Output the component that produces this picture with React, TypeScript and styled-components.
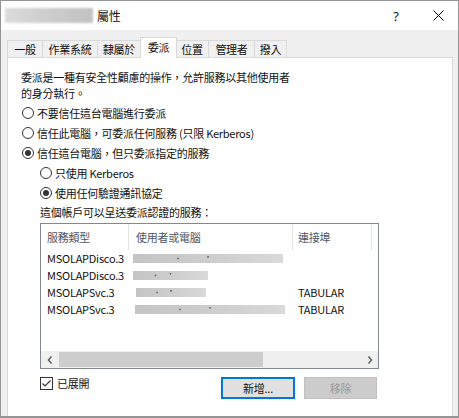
import React from "react";
import styled, { createGlobalStyle, css } from "styled-components";

const GlobalStyle = createGlobalStyle`
  html, body { margin: 0; padding: 0; background: #ffffff; }
  body {
    font-family: "Noto Sans CJK TC", "Noto Sans", sans-serif;
    font-size: 11px;
    letter-spacing: -0.25px;
    color: #111;
  }
  * { box-sizing: border-box; }
`;

const Window = styled.div`
  width: 459px;
  height: 418px;
  border: 1px solid #959595;
  border-bottom-width: 2px;
  background: #f0f0f0;
  display: flex;
  flex-direction: column;
  overflow: hidden;
`;

const TitleBar = styled.div`
  height: 29px;
  background: #ffffff;
  display: flex;
  align-items: center;
  padding-left: 4px;
  flex-shrink: 0;
`;

const BlurredTitle = styled.div`
  width: 88px;
  height: 15px;
  background: linear-gradient(90deg, #dcdcdc, #cbcbcb 55%, #c2c2c2);
  filter: blur(0.8px);
`;

const TitleText = styled.span`
  margin-left: 4px;
  font-size: 12px;
  line-height: 16px;
`;

const CaptionButton = styled.div<{ $w: number }>`
  width: ${(p) => p.$w}px;
  height: 29px;
  display: flex;
  align-items: center;
  justify-content: center;
  font-family: "Noto Sans", sans-serif;
  font-size: 13px;
`;

const Spacer = styled.div`
  flex: 1;
`;

const Body = styled.div`
  flex: 1;
  display: flex;
  flex-direction: column;
  padding: 7px 5px 0 6px;
  min-height: 0;
`;

const TabStrip = styled.div`
  display: flex;
  align-items: flex-end;
  height: 20px;
  flex-shrink: 0;
`;

const Tab = styled.div<{ $w: number; $selected?: boolean; $last?: boolean }>`
  width: ${(p) => p.$w}px;
  height: 17px;
  border: 1px solid #d9d9d9;
  border-bottom: none;
  border-right: ${(p) => (p.$last ? "1px solid #d9d9d9" : "none")};
  background: #f0f0f0;
  display: flex;
  align-items: center;
  justify-content: center;
  font-size: 11px;
  line-height: 15px;
  ${(p) =>
    p.$selected &&
    css`
      height: 21px;
      background: #ffffff;
      border-right: 1px solid #d9d9d9;
      margin-right: -2px;
      margin-bottom: -1px;
      position: relative;
      z-index: 1;
      padding-bottom: 2px;
    `}
`;

const Panel = styled.div`
  flex: 1;
  background: #ffffff;
  border: 1px solid #d9d9d9;
  border-bottom: none;
  padding: 11px 0 0 13px;
  display: flex;
  flex-direction: column;
`;

const Description = styled.div`
  line-height: 16px;
  margin-bottom: 2px;
`;

const RadioRow = styled.div<{ $indent: number }>`
  display: flex;
  align-items: center;
  height: 20px;
  padding-left: ${(p) => p.$indent}px;
`;

const RadioCircle = styled.span<{ $checked?: boolean }>`
  width: 12px;
  height: 12px;
  border: 1px solid #333;
  border-radius: 50%;
  margin-left: 1px;
  margin-right: 3px;
  background: #fff;
  display: flex;
  align-items: center;
  justify-content: center;
  flex-shrink: 0;
  &::after {
    content: "";
    width: 6px;
    height: 6px;
    border-radius: 50%;
    background: ${(p) => (p.$checked ? "#333" : "transparent")};
  }
`;

const SectionLabel = styled.div`
  height: 18px;
  line-height: 18px;
  padding-left: 19px;
`;

const ListBox = styled.div`
  margin-top: 2px;
  margin-left: 19px;
  width: 339px;
  height: 146px;
  border: 1px solid #828790;
  background: #fff;
  display: flex;
  flex-direction: column;
`;

const HeaderRow = styled.div`
  display: grid;
  grid-template-columns: 88px 164px 79px;
  height: 26px;
`;

const HeaderCell = styled.div<{ $pad: number }>`
  border-right: 1px solid #e5e5e5;
  padding-left: ${(p) => p.$pad}px;
  display: flex;
  align-items: center;
  color: #4d5666;
  padding-bottom: 1px;
`;

const DataRow = styled.div`
  display: grid;
  grid-template-columns: 88px 164px 79px;
  height: 17px;
  align-items: center;
`;

const Cell = styled.div<{ $pad: number }>`
  padding-left: ${(p) => p.$pad}px;
  white-space: nowrap;
  line-height: 17px;
`;

const BlurBar = styled.div<{ $off: number; $w: number }>`
  margin-left: ${(p) => p.$off}px;
  width: ${(p) => p.$w}px;
  height: 9px;
  background:
    radial-gradient(circle at 30% 50%, #777 0 0.8px, transparent 1.2px),
    radial-gradient(circle at 50% 30%, #777 0 0.8px, transparent 1.2px),
    linear-gradient(90deg, #c4c4c4, #cfcfcf 60%, #d9d9d9);
  filter: blur(0.4px);
`;

const ListFill = styled.div`
  flex: 1;
`;

const ScrollBar = styled.div`
  height: 17px;
  background: #f0f0f0;
  display: flex;
  align-items: center;
`;

const ScrollArrow = styled.div`
  width: 17px;
  height: 17px;
  display: flex;
  align-items: center;
  justify-content: center;
`;

const ScrollThumb = styled.div`
  width: 204px;
  height: 15px;
  margin-left: 1px;
  background: #cdcdcd;
`;

const BottomRow = styled.div`
  margin-top: 8px;
  margin-left: 19px;
  width: 339px;
  display: flex;
  align-items: flex-start;
`;

const CheckLabel = styled.label`
  display: flex;
  align-items: center;
  height: 13px;
  gap: 4px;
  line-height: 13px;
`;

const CheckBox = styled.span`
  width: 13px;
  height: 13px;
  border: 1px solid #333;
  background: #fff;
  display: flex;
  align-items: center;
  justify-content: center;
`;

const Buttons = styled.div`
  margin-left: auto;
  margin-right: 2px;
  display: flex;
  gap: 9px;
`;

const Button = styled.div<{ $primary?: boolean; $disabled?: boolean }>`
  width: ${(p) => (p.$primary ? 74 : 73)}px;
  height: 22px;
  display: flex;
  align-items: center;
  justify-content: center;
  background: ${(p) => (p.$disabled ? "#cccccc" : "#e1e1e1")};
  border: ${(p) => (p.$primary ? "2px solid #0078d7" : "1px solid #bfbfbf")};
  color: ${(p) => (p.$disabled ? "#9a9a9a" : "#111")};
  line-height: 16px;
`;

const tabs = [
  { label: "一般", w: 35 },
  { label: "作業系統", w: 55 },
  { label: "隸屬於", w: 43 },
  { label: "委派", w: 37, selected: true },
  { label: "位置", w: 33 },
  { label: "管理者", w: 46 },
  { label: "撥入", w: 33, last: true },
];

const rows = [
  { type: "MSOLAPDisco.3", off: 4, w: 150, port: "" },
  { type: "MSOLAPDisco.3", off: 4, w: 75, port: "" },
  { type: "MSOLAPSvc.3", off: 7, w: 70, port: "TABULAR" },
  { type: "MSOLAPSvc.3", off: 6, w: 150, port: "TABULAR" },
];

const Chevron = ({ dir }: { dir: "left" | "right" }) => (
  <svg width="6" height="8" viewBox="0 0 6 8">
    <polyline
      points={dir === "left" ? "4.5,0.5 1.5,4 4.5,7.5" : "1.5,0.5 4.5,4 1.5,7.5"}
      fill="none"
      stroke="#606060"
      strokeWidth="1.5"
    />
  </svg>
);

export default function App() {
  return (
    <>
      <GlobalStyle />
      <Window>
        <TitleBar>
          <BlurredTitle />
          <TitleText>屬性</TitleText>
          <Spacer />
          <CaptionButton $w={44}>?</CaptionButton>
          <CaptionButton $w={40}>
            <svg width="11" height="11" viewBox="0 0 11 11">
              <path d="M0.5 0.5 L10.5 10.5 M10.5 0.5 L0.5 10.5" stroke="#000" strokeWidth="1" />
            </svg>
          </CaptionButton>
        </TitleBar>
        <Body>
          <TabStrip>
            {tabs.map((t) => (
              <Tab key={t.label} $w={t.w} $selected={t.selected} $last={t.last}>
                {t.label}
              </Tab>
            ))}
          </TabStrip>
          <Panel>
            <Description>
              委派是一種有安全性顧慮的操作，允許服務以其他使用者
              <br />
              的身分執行。
            </Description>
            <RadioRow $indent={0}>
              <RadioCircle />
              不要信任這台電腦進行委派
            </RadioRow>
            <RadioRow $indent={0}>
              <RadioCircle />
              信任此電腦，可委派任何服務 (只限 Kerberos)
            </RadioRow>
            <RadioRow $indent={0}>
              <RadioCircle $checked />
              信任這台電腦，但只委派指定的服務
            </RadioRow>
            <RadioRow $indent={18}>
              <RadioCircle />
              只使用 Kerberos
            </RadioRow>
            <RadioRow $indent={18}>
              <RadioCircle $checked />
              使用任何驗證通訊協定
            </RadioRow>
            <SectionLabel>這個帳戶可以呈送委派認證的服務：</SectionLabel>
            <ListBox>
              <HeaderRow>
                <HeaderCell $pad={6}>服務類型</HeaderCell>
                <HeaderCell $pad={7}>使用者或電腦</HeaderCell>
                <HeaderCell $pad={5}>連接埠</HeaderCell>
              </HeaderRow>
              {rows.map((r, i) => (
                <DataRow key={i}>
                  <Cell $pad={6}>{r.type}</Cell>
                  <Cell $pad={0}>
                    <BlurBar $off={r.off} $w={r.w} />
                  </Cell>
                  <Cell $pad={5}>{r.port}</Cell>
                </DataRow>
              ))}
              <ListFill />
              <ScrollBar>
                <ScrollArrow>
                  <Chevron dir="left" />
                </ScrollArrow>
                <ScrollThumb />
                <Spacer />
                <ScrollArrow>
                  <Chevron dir="right" />
                </ScrollArrow>
              </ScrollBar>
            </ListBox>
            <BottomRow>
              <CheckLabel>
                <CheckBox>
                  <svg width="11" height="11" viewBox="0 0 11 11">
                    <polyline points="1.5,5.5 4,8 9.5,2.5" fill="none" stroke="#333" strokeWidth="1.2" />
                  </svg>
                </CheckBox>
                已展開
              </CheckLabel>
              <Buttons>
                <Button $primary>新增...</Button>
                <Button $disabled>移除</Button>
              </Buttons>
            </BottomRow>
          </Panel>
        </Body>
      </Window>
    </>
  );
}
